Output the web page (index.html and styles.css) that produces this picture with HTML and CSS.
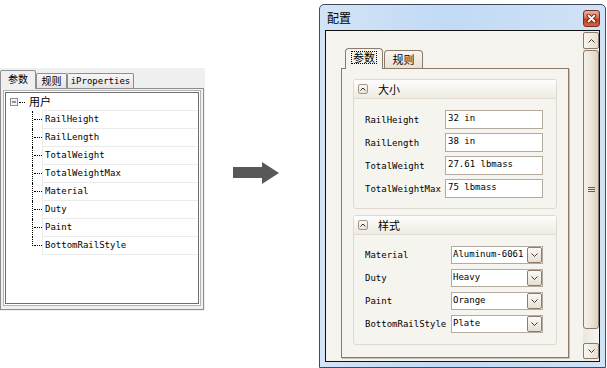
FILE: index.html
```html
<!DOCTYPE html>
<html lang="zh">
<head>
  <meta charset="UTF-8">
  <title>配置</title>
  <link rel="stylesheet" href="styles.css">
</head>
<body>
  <div class="page">
    <!-- parameter browser -->
    <div class="browser">
      <div class="btabs">
        <div class="btab active cjk">参数</div>
        <div class="btab cjk">规则</div>
        <div class="btab">iProperties</div>
      </div>
      <div class="bpane">
        <div class="tree-frame">
          <div class="tree">
            <div class="root">
              <svg class="toggle" width="8" height="8" viewBox="0 0 8 8">
                <rect x="0.5" y="0.5" width="7" height="7" fill="#f4f4f4" stroke="#8c8c8c"/>
                <line x1="2" y1="4" x2="6" y2="4" stroke="#1e3a6e"/>
              </svg>
              <span class="root-dots"></span>
              <span class="root-label cjk">用户</span>
            </div>
            <div class="leaf"><span class="branch"></span><span class="cell">RailHeight</span></div>
            <div class="leaf"><span class="branch"></span><span class="cell">RailLength</span></div>
            <div class="leaf"><span class="branch"></span><span class="cell">TotalWeight</span></div>
            <div class="leaf"><span class="branch"></span><span class="cell">TotalWeightMax</span></div>
            <div class="leaf"><span class="branch"></span><span class="cell">Material</span></div>
            <div class="leaf"><span class="branch"></span><span class="cell">Duty</span></div>
            <div class="leaf"><span class="branch"></span><span class="cell">Paint</span></div>
            <div class="leaf last"><span class="branch"></span><span class="cell">BottomRailStyle</span></div>
          </div>
        </div>
      </div>
    </div>

    <svg class="arrow" width="46" height="22" viewBox="0 0 46 22">
      <polygon points="0,5 29,5 29,0 46,11 29,22 29,16 0,16" fill="#58585b"/>
    </svg>

    <!-- dialog -->
    <div class="window">
      <div class="titlebar">
        <span class="title cjk">配置</span>
        <span class="close">
          <svg width="11" height="9" viewBox="0 0 11 9">
            <path d="M2.5 1.5 L8.5 7.5 M8.5 1.5 L2.5 7.5" stroke="#5a1a0e" stroke-width="3.6" stroke-linecap="round"/>
            <path d="M2.5 1.5 L8.5 7.5 M8.5 1.5 L2.5 7.5" stroke="#fff" stroke-width="1.9" stroke-linecap="round"/>
          </svg>
        </span>
      </div>
      <div class="client">
        <div class="content">
          <div class="dtabs">
            <div class="dtab active"><span class="focus cjk">参数</span></div>
            <div class="dtab cjk">规则</div>
          </div>
          <div class="dpane">
            <div class="group">
              <div class="group-head">
                <span class="collapse">
                  <svg width="6" height="4" viewBox="0 0 6 4"><path d="M0.5 3.5 L3 1 L5.5 3.5" fill="none" stroke="#3b2e25"/></svg>
                </span>
                <span class="cjk">大小</span>
              </div>
              <div class="group-body">
                <div class="field"><span class="label">RailHeight</span><span class="input">32 in</span></div>
                <div class="field"><span class="label">RailLength</span><span class="input">38 in</span></div>
                <div class="field"><span class="label">TotalWeight</span><span class="input">27.61 lbmass</span></div>
                <div class="field"><span class="label">TotalWeightMax</span><span class="input">75 lbmass</span></div>
              </div>
            </div>

            <div class="group">
              <div class="group-head">
                <span class="collapse">
                  <svg width="6" height="4" viewBox="0 0 6 4"><path d="M0.5 3.5 L3 1 L5.5 3.5" fill="none" stroke="#3b2e25"/></svg>
                </span>
                <span class="cjk">样式</span>
              </div>
              <div class="group-body combos">
                <div class="field">
                  <span class="label wide">Material</span>
                  <span class="combo"><span class="value">Aluminum-6061</span><span class="drop"><svg width="7" height="4" viewBox="0 0 7 4"><path d="M0.5 0.5 L3.5 3.5 L6.5 0.5" fill="none" stroke="#4a3b30"/></svg></span></span>
                </div>
                <div class="field">
                  <span class="label wide">Duty</span>
                  <span class="combo"><span class="value">Heavy</span><span class="drop"><svg width="7" height="4" viewBox="0 0 7 4"><path d="M0.5 0.5 L3.5 3.5 L6.5 0.5" fill="none" stroke="#4a3b30"/></svg></span></span>
                </div>
                <div class="field">
                  <span class="label wide">Paint</span>
                  <span class="combo"><span class="value">Orange</span><span class="drop"><svg width="7" height="4" viewBox="0 0 7 4"><path d="M0.5 0.5 L3.5 3.5 L6.5 0.5" fill="none" stroke="#4a3b30"/></svg></span></span>
                </div>
                <div class="field">
                  <span class="label wide">BottomRailStyle</span>
                  <span class="combo"><span class="value">Plate</span><span class="drop"><svg width="7" height="4" viewBox="0 0 7 4"><path d="M0.5 0.5 L3.5 3.5 L6.5 0.5" fill="none" stroke="#4a3b30"/></svg></span></span>
                </div>
              </div>
            </div>
          </div>
        </div>

        <div class="scrollbar">
          <div class="sb-btn"><svg width="7" height="4" viewBox="0 0 7 4"><path d="M0.5 3.5 L3.5 0.5 L6.5 3.5" fill="none" stroke="#4a3b30"/></svg></div>
          <div class="thumb">
            <svg width="7" height="5" viewBox="0 0 7 5">
              <line x1="0" y1="0.5" x2="7" y2="0.5" stroke="#6d5c50"/>
              <line x1="0" y1="2.5" x2="7" y2="2.5" stroke="#6d5c50"/>
              <line x1="0" y1="4.5" x2="7" y2="4.5" stroke="#6d5c50"/>
            </svg>
          </div>
          <div class="sb-gap"></div>
          <div class="sb-btn down"><svg width="7" height="4" viewBox="0 0 7 4"><path d="M0.5 0.5 L3.5 3.5 L6.5 0.5" fill="none" stroke="#4a3b30"/></svg></div>
        </div>
      </div>
    </div>
  </div>
</body>
</html>
```

FILE: styles.css
```css
html, body {
  margin: 0;
  padding: 0;
  background: #fff;
  color: #000;
  font-family: "DejaVu Sans Mono", "Noto Sans CJK SC", monospace;
  font-size: 9px;
}

.cjk {
  font-family: "Noto Sans CJK SC", sans-serif;
}

.page {
  display: flex;
  align-items: flex-start;
}

/* ---- parameter browser ---- */

.browser {
  width: 205px;
  height: 243px;
  box-sizing: border-box;
  margin-top: 68px;
  padding: 2px 1px 1px 0;
  background: #f0f0f0;
}

.btabs {
  display: flex;
  align-items: flex-end;
  height: 18px;
}

.btab {
  box-sizing: border-box;
  height: 15px;
  border: 1px solid #8e8e8e;
  border-bottom: none;
  border-radius: 2px 2px 0 0;
  background: linear-gradient(#f7f7f7, #e4e4e4);
  text-align: center;
  line-height: 14px;
  font-size: 10px;
}

.btab:nth-child(1) { width: 36px; }
.btab:nth-child(2) { width: 31px; }
.btab:nth-child(3) { width: 67px; font-size: 9px; }

.btab.active {
  height: 19px;
  margin-bottom: -1px;
  position: relative;
  background: #f0f0f0;
  line-height: 16px;
}

.bpane {
  box-sizing: border-box;
  width: 204px;
  height: 222px;
  border: 1px solid #8e8e8e;
  padding: 1px 2px 3px;
  background: #f0f0f0;
}

.tree-frame {
  box-sizing: border-box;
  height: 216px;
  border: 1px solid #b4b4b4;
  padding: 1px;
  background: #fff;
}

.tree {
  box-sizing: border-box;
  height: 100%;
  border: 1px solid #6e6e6e;
}

.root {
  display: flex;
  align-items: center;
  height: 18px;
  padding-left: 4px;
  background: linear-gradient(#ebebeb, #ebebeb) no-repeat left 36px bottom / calc(100% - 36px) 1px;
}

.toggle {
  display: block;
  flex: none;
}

.root-dots {
  width: 6px;
  margin-left: 1px;
  border-top: 1px dotted #000;
}

.root-label {
  margin-left: 4px;
  font-size: 11px;
  line-height: 14px;
  padding-bottom: 3px;
}

.leaf {
  display: flex;
  height: 18px;
}

.branch {
  position: relative;
  width: 36px;
  flex: none;
}

.branch::before {
  content: "";
  position: absolute;
  left: 26px;
  top: 0;
  bottom: 0;
  border-left: 1px dotted #000;
}

.branch::after {
  content: "";
  position: absolute;
  left: 28px;
  top: 8px;
  width: 8px;
  border-top: 1px dotted #000;
}

.leaf.last .branch::before {
  bottom: 9px;
}

.cell {
  flex: 1;
  border-left: 1px solid #ebebeb;
  border-bottom: 1px solid #ebebeb;
  padding-left: 2px;
  line-height: 17px;
}

.arrow {
  display: block;
  margin: 162px 0 0 28px;
}

/* ---- dialog ---- */

.window {
  box-sizing: border-box;
  width: 287px;
  height: 364px;
  margin: 4px 0 0 40px;
  border: 1px solid #3e4c5e;
  border-radius: 5px 5px 0 0;
  padding: 0 5px 5px;
  background: linear-gradient(to right, #d3e4f6, #c1daf5 45%, #d1e3f6);
  display: flex;
  flex-direction: column;
}

.titlebar {
  height: 25px;
  display: flex;
  align-items: center;
  justify-content: space-between;
}

.title {
  padding-left: 2px;
  font-size: 12px;
  line-height: 16px;
}

.close {
  box-sizing: border-box;
  width: 17px;
  height: 17px;
  margin-top: 1px;
  border: 1px solid #7a2e20;
  border-radius: 3px;
  background: linear-gradient(#eab1a2, #d9694f 48%, #c23b1f 52%, #d8603f);
  display: flex;
  align-items: center;
  justify-content: center;
}

.close svg {
  display: block;
}

.client {
  flex: 1;
  display: flex;
  border: 1px solid #111;
  background: #f5f3ee;
}

.content {
  flex: 1;
  padding: 17px 0 0 15px;
}

.dtabs {
  display: flex;
  align-items: flex-end;
  gap: 1px;
  height: 20px;
  margin-left: 4px;
}

.dtab {
  box-sizing: border-box;
  width: 39px;
  height: 18px;
  border: 1px solid #8e7a6b;
  border-bottom: none;
  border-radius: 4px 4px 0 0;
  background: linear-gradient(#f8f6f2, #e8e2d8);
  text-align: center;
  font-size: 11px;
  line-height: 17px;
}

.dtab.active {
  width: 38px;
  height: 21px;
  margin-bottom: -1px;
  position: relative;
  background: #f6f4ef;
  display: flex;
  justify-content: center;
  align-items: flex-start;
  padding-top: 3px;
}

.focus {
  display: block;
  outline: 1px dotted #000;
  padding: 0 1px;
  line-height: 11px;
  height: 11px;
}

.dpane {
  box-sizing: border-box;
  width: 228px;
  height: 290px;
  border: 1px solid #8d7868;
  box-shadow: 1px 1px 0 #c9c0b4;
  padding: 10px 11px;
  background: #f6f4ef;
}

.group {
  border: 1px solid #e0d9cf;
  border-radius: 3px;
  background: #f6f4ef;
}

.group + .group {
  margin-top: 6px;
}

.group-head {
  height: 18px;
  display: flex;
  align-items: center;
  padding-left: 4px;
  border-bottom: 1px solid #e2dbd0;
  background: linear-gradient(#fefefd, #efebe3);
  font-size: 11px;
}

.collapse {
  box-sizing: border-box;
  width: 10px;
  height: 10px;
  margin-right: 10px;
  border: 1px solid #a59486;
  border-radius: 2px;
  background: linear-gradient(#fbfaf7, #e9e3d9);
  display: flex;
  align-items: center;
  justify-content: center;
}

.collapse svg {
  display: block;
}

.group-body {
  display: flex;
  flex-direction: column;
  gap: 4px;
  padding: 11px 12px 10px 11px;
}

.group-body.combos {
  gap: 5px;
  padding-bottom: 11px;
}

.field {
  display: flex;
  align-items: center;
}

.label {
  width: 80px;
  flex: none;
}

.label.wide {
  width: 86px;
}

.input {
  box-sizing: border-box;
  width: 98px;
  height: 19px;
  border: 1px solid #b3aaa0;
  background: #fff;
  padding-left: 2px;
  line-height: 15px;
}

.combo {
  box-sizing: border-box;
  width: 92px;
  height: 18px;
  border: 1px solid #b3aaa0;
  background: #fff;
  display: flex;
  align-items: center;
}

.value {
  flex: 1;
  padding-left: 1px;
  line-height: 14px;
  align-self: flex-start;
  white-space: nowrap;
  overflow: hidden;
}

.drop {
  box-sizing: border-box;
  width: 15px;
  height: 16px;
  border: 1px solid #8f7c6c;
  border-radius: 2px;
  background: linear-gradient(#fbfaf7, #e6dfd3);
  display: flex;
  align-items: center;
  justify-content: center;
}

.drop svg {
  display: block;
}

/* ---- scrollbar ---- */

.scrollbar {
  width: 16px;
  display: flex;
  flex-direction: column;
  padding: 1px 0 2px;
  background: linear-gradient(to right, #ebe7de, #f7f5f0);
}

.sb-btn {
  box-sizing: border-box;
  height: 17px;
  border: 1px solid #8d7869;
  border-radius: 2px;
  background: linear-gradient(to right, #f8f6f1, #e6dfd3);
  display: flex;
  align-items: center;
  justify-content: center;
}

.sb-btn.down {
  height: 16px;
}

.sb-btn svg {
  display: block;
}

.thumb {
  box-sizing: border-box;
  height: 279px;
  margin-top: 1px;
  border: 1px solid #8d7869;
  border-radius: 3px;
  background: linear-gradient(to right, #f5f1ea, #ece6da 50%, #dbd2c2);
  display: flex;
  align-items: center;
  justify-content: center;
}

.thumb svg {
  display: block;
}

.sb-gap {
  flex: 1;
}
```
